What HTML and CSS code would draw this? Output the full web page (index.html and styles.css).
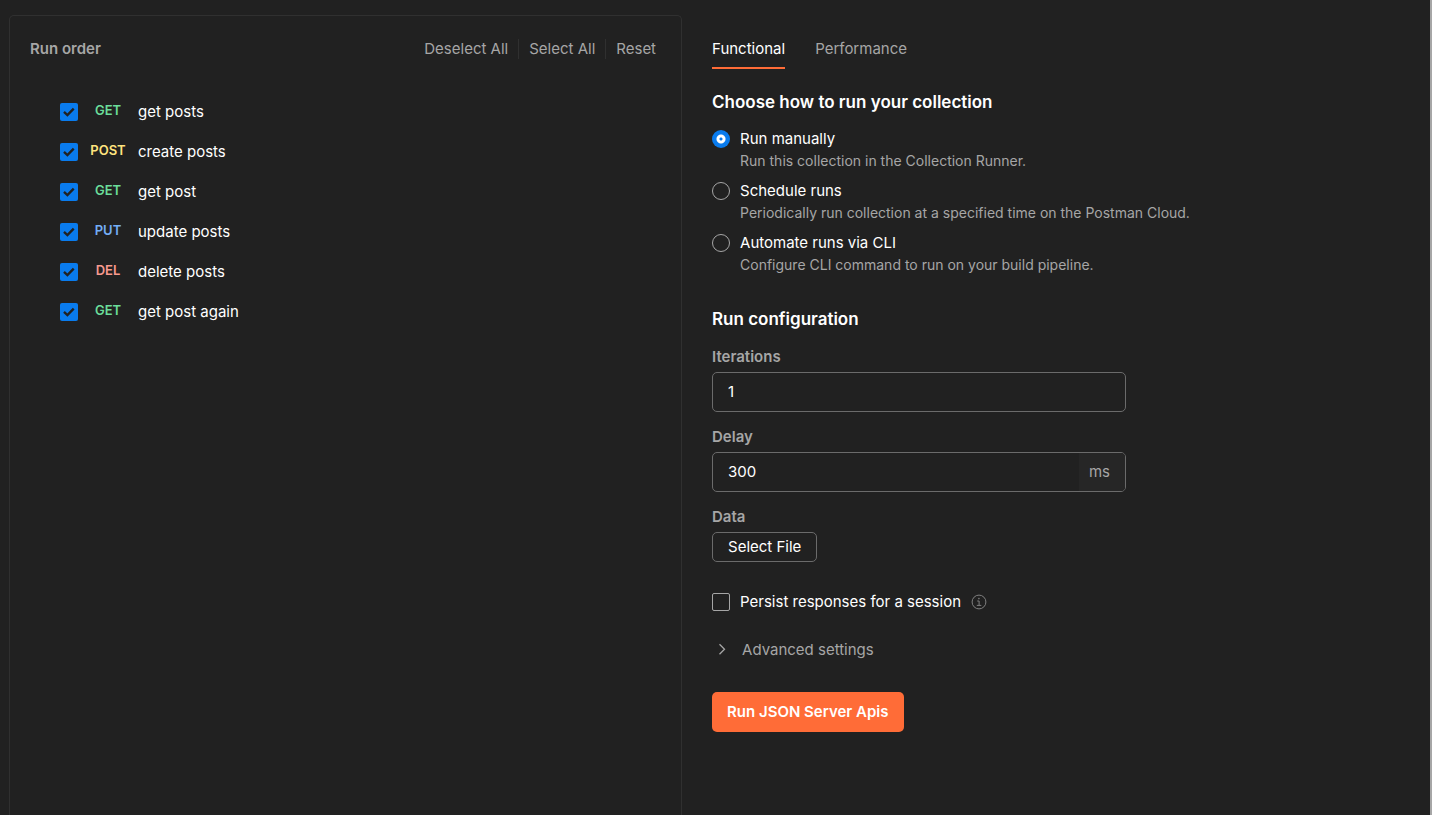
FILE: index.html
```html
<!DOCTYPE html>
<html lang="en">
<head>
<meta charset="utf-8">
<title>Collection Runner</title>
<link rel="stylesheet" href="styles.css">
</head>
<body>
<main class="runner">
  <section class="order">
    <header class="order-head">
      <h2 class="order-title">Run order</h2>
      <div class="order-actions">
        <button type="button" class="text-button">Deselect All</button>
        <button type="button" class="text-button">Select All</button>
        <button type="button" class="text-button">Reset</button>
      </div>
    </header>
    <ul class="requests">
      <li><label class="request"><input type="checkbox" class="check" checked><span class="method get">GET</span><span>get posts</span></label></li>
      <li><label class="request"><input type="checkbox" class="check" checked><span class="method post">POST</span><span>create posts</span></label></li>
      <li><label class="request"><input type="checkbox" class="check" checked><span class="method get">GET</span><span>get post</span></label></li>
      <li><label class="request"><input type="checkbox" class="check" checked><span class="method put">PUT</span><span>update posts</span></label></li>
      <li><label class="request"><input type="checkbox" class="check" checked><span class="method del">DEL</span><span>delete posts</span></label></li>
      <li><label class="request"><input type="checkbox" class="check" checked><span class="method get">GET</span><span>get post again</span></label></li>
    </ul>
  </section>

  <form class="config">
    <nav class="tabs">
      <a href="#functional" class="tab active">Functional</a>
      <a href="#performance" class="tab">Performance</a>
    </nav>

    <h3 class="heading">Choose how to run your collection</h3>
    <div class="options">
      <label class="option">
        <input type="radio" name="mode" class="radio" checked>
        <span class="option-text"><span class="option-name">Run manually</span><span class="option-note">Run this collection in the Collection Runner.</span></span>
      </label>
      <label class="option">
        <input type="radio" name="mode" class="radio">
        <span class="option-text"><span class="option-name">Schedule runs</span><span class="option-note">Periodically run collection at a specified time on the Postman Cloud.</span></span>
      </label>
      <label class="option">
        <input type="radio" name="mode" class="radio">
        <span class="option-text"><span class="option-name">Automate runs via CLI</span><span class="option-note">Configure CLI command to run on your build pipeline.</span></span>
      </label>
    </div>

    <h3 class="heading">Run configuration</h3>
    <div class="fields">
      <div class="field">
        <label class="field-label" for="iterations">Iterations</label>
        <div class="box"><input class="box-input" id="iterations" type="text" value="1"></div>
      </div>
      <div class="field">
        <label class="field-label" for="delay">Delay</label>
        <div class="box"><input class="box-input" id="delay" type="text" value="300"><span class="unit">ms</span></div>
      </div>
      <div class="field">
        <label class="field-label" for="file">Data</label>
        <button type="button" class="file-button" id="file">Select File</button>
      </div>
    </div>

    <div class="persist">
      <label class="persist-label"><input type="checkbox" class="check"><span>Persist responses for a session</span></label>
      <svg class="info" viewBox="0 0 16 16" fill="none" stroke="currentColor">
        <circle cx="8" cy="8" r="6.9"/>
        <path d="M6.2 7h1.9v4.3M5.8 11.4h4.5"/>
        <circle cx="7.9" cy="4.6" r=".8" fill="currentColor" stroke="none"/>
      </svg>
    </div>

    <button type="button" class="advanced">
      <svg class="chevron" viewBox="0 0 20 20" fill="none" stroke="currentColor" stroke-width="1.3"><path d="M7.5 4.2l5 5-5 5"/></svg>
      <span>Advanced settings</span>
    </button>

    <button type="button" class="run-button">Run JSON Server Apis</button>
  </form>
</main>
</body>
</html>
```

FILE: styles.css
```css
* {
  box-sizing: border-box;
}

body {
  margin: 0;
  background: #212121;
  color: #fff;
  font: 15px/20px Inter, "Liberation Sans", sans-serif;
}

button,
input {
  margin: 0;
  font: inherit;
  color: inherit;
}

button {
  padding: 0;
  border: 0;
  background: none;
  cursor: pointer;
}

.runner {
  display: flex;
  gap: 30px;
  min-height: 100vh;
  padding: 15px 0 0 9px;
  border-right: 2px solid #a6a6a6;
}

.order {
  flex: 0 0 47vw;
  padding: 23px 25px 0 20px;
  border: 1px solid #303030;
  border-bottom: 0;
  border-radius: 5px 5px 0 0;
}

.order-head {
  display: flex;
  justify-content: space-between;
}

.order-title {
  margin: 0;
  font-size: 15px;
  font-weight: 600;
  color: #a6a6a6;
}

.order-actions {
  display: flex;
}

.text-button {
  padding: 0 10px;
  border-left: 1px solid #303030;
  color: #a6a6a6;
}

.text-button:first-child {
  border-left: 0;
}

.text-button:last-child {
  padding-right: 0;
}

.requests {
  display: grid;
  margin: 33px 0 0;
  padding: 0 0 0 30px;
  list-style: none;
}

.request {
  display: flex;
  align-items: center;
  height: 40px;
}

.check {
  flex: none;
  width: 18px;
  height: 18px;
  appearance: none;
  border: 1px solid #a6a6a6;
  border-radius: 2px;
}

.check:checked {
  border: 0;
  background: #097bed url("data:image/svg+xml,%3Csvg xmlns='http://www.w3.org/2000/svg' viewBox='0 0 18 18'%3E%3Cpath d='M4 8.8l3.4 3.2 6.3-6.4' fill='none' stroke='%23212121' stroke-width='2.4'/%3E%3C/svg%3E");
}

.method {
  width: 60px;
  padding-bottom: 4px;
  font-size: 13px;
  font-weight: 600;
  text-align: center;
}

.get {
  color: #6bdd9a;
}

.post {
  color: #ffe47e;
}

.put {
  color: #74aef6;
}

.del {
  color: #f79a8e;
}

.config {
  display: flex;
  flex: 1;
  flex-direction: column;
  align-items: flex-start;
  padding-top: 24px;
}

.tabs {
  display: flex;
  gap: 30px;
}

.tab {
  padding-bottom: 8px;
  border-bottom: 2px solid transparent;
  color: #a6a6a6;
  text-decoration: none;
}

.active {
  border-color: #ff6c37;
  color: #fff;
}

.heading {
  margin: 21px 0 0;
  font-size: 17px;
  line-height: 25px;
  font-weight: 600;
}

.options {
  display: grid;
  gap: 7px;
  margin: 12px 0 10px;
}

.option {
  display: flex;
  gap: 10px;
}

.radio {
  flex: none;
  width: 18px;
  height: 18px;
  margin-top: 3px;
  appearance: none;
  border: 1px solid #a6a6a6;
  border-radius: 50%;
}

.radio:checked {
  border: 0;
  background: radial-gradient(circle, #097bed 1px, #fff 2px, #fff 4px, #097bed 5px);
}

.option-text {
  display: grid;
}

.option-name {
  line-height: 23px;
}

.option-note {
  font-size: 14px;
  line-height: 22px;
  color: #a6a6a6;
}

.fields {
  display: grid;
  gap: 15px;
  width: 414px;
  max-width: 100%;
  margin-top: 15px;
}

.field {
  display: grid;
  gap: 5px;
  justify-items: start;
}

.field-label {
  font-weight: 600;
  color: #a6a6a6;
}

.box {
  display: flex;
  width: 100%;
  height: 40px;
  overflow: hidden;
  border: 1px solid #6b6b6b;
  border-radius: 5px;
}

.box-input {
  flex: 1;
  min-width: 0;
  padding: 0 15px;
  border: 0;
  outline: 0;
  background: none;
}

.unit {
  padding: 9px 15px 9px 10px;
  background: #262626;
  color: #a6a6a6;
}

.file-button {
  height: 30px;
  padding: 0 15px;
  border: 1px solid #6b6b6b;
  border-radius: 5px;
}

.persist {
  display: flex;
  align-items: center;
  gap: 10px;
  margin-top: 30px;
}

.persist-label {
  display: flex;
  align-items: center;
  gap: 10px;
}

.info {
  width: 16px;
  height: 16px;
  color: #808080;
}

.advanced {
  display: flex;
  align-items: center;
  gap: 10px;
  margin-top: 28px;
  color: #a6a6a6;
}

.chevron {
  width: 20px;
  height: 20px;
}

.run-button {
  height: 40px;
  margin-top: 32px;
  padding: 0 15px;
  border-radius: 5px;
  background: #ff6c37;
  font-weight: 600;
}
```
